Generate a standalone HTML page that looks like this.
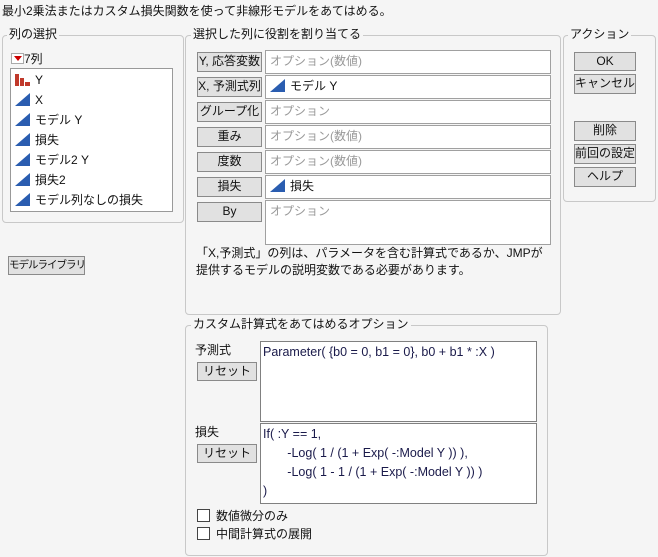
<!DOCTYPE html><html><head><meta charset="utf-8"><style>
body{margin:0;width:658px;height:557px;background:#f5f5f5;font-family:"Liberation Sans","Noto Sans CJK JP",sans-serif;font-size:12px;color:#111;position:relative;overflow:hidden}
.a{position:absolute;white-space:nowrap}
.g{position:absolute;border:1px solid #c8c8c8;border-radius:4px}
.gl{position:absolute;background:#f5f5f5;padding:0 2px;line-height:14px}
.b{position:absolute;background:#e1e1e1;border:1px solid #8a8a8a;box-sizing:border-box;text-align:center;line-height:17px;white-space:nowrap;overflow:hidden}
.f{position:absolute;background:#fff;border:1px solid #a0a0a0;box-sizing:border-box;padding-left:4px;line-height:21px}
.ph{color:#999}
.tri{display:inline-block;width:0;height:0;border-left:15px solid transparent;border-bottom:13px solid #2a5db0;vertical-align:-2px;margin-right:5px}
.ta{position:absolute;background:#fff;border:1px solid #808080;box-sizing:border-box;padding:1px 2px;color:#1a1a4a;font-size:12.5px;line-height:19px;white-space:pre}
.cb{position:absolute;width:13px;height:13px;border:1px solid #444;background:#fff;box-sizing:border-box}
</style></head><body>
<div class="a" style="left:2px;top:2px">最小2乗法またはカスタム損失関数を使って非線形モデルをあてはめる。</div>

<div class="g" style="left:2px;top:35px;width:180px;height:186px"></div>
<div class="gl" style="left:7px;top:27px">列の選択</div>
<div class="a" style="left:11px;top:50px"><span style="display:inline-block;width:11px;height:9px;border:1px solid #aaa;background:#fff;position:relative;vertical-align:-1px"><span style="position:absolute;left:2px;top:2px;border-left:4px solid transparent;border-right:4px solid transparent;border-top:5px solid #c00"></span></span>7列</div>
<div style="position:absolute;left:10px;top:68px;width:163px;height:144px;background:#fff;border:1px solid #999;box-sizing:border-box"></div>
<div class="a" style="left:15px;top:70px;line-height:20px">
<div><span style="display:inline-block;width:15px;height:14px;vertical-align:-2px;margin-right:5px;position:relative"><span style="position:absolute;left:0;bottom:0;width:4px;height:12px;background:#c0392b"></span><span style="position:absolute;left:5px;bottom:0;width:4px;height:8px;background:#c0392b"></span><span style="position:absolute;left:10px;bottom:0;width:5px;height:4px;background:#c0392b"></span></span>Y</div>
<div><span class="tri"></span>X</div>
<div><span class="tri"></span>モデル Y</div>
<div><span class="tri"></span>損失</div>
<div><span class="tri"></span>モデル2 Y</div>
<div><span class="tri"></span>損失2</div>
<div><span class="tri"></span>モデル列なしの損失</div>
</div>
<div class="b" style="left:8px;top:256px;width:77px;height:19px;font-size:10.5px;letter-spacing:-1px;padding:0">モデルライブラリ</div>

<div class="g" style="left:185px;top:35px;width:374px;height:278px"></div>
<div class="gl" style="left:191px;top:27px">選択した列に役割を割り当てる</div>
<div class="b" style="left:197px;top:52px;width:65px;height:20px">Y, 応答変数</div>
<div class="b" style="left:197px;top:77px;width:65px;height:20px">X, 予測式列</div>
<div class="b" style="left:197px;top:102px;width:65px;height:20px">グループ化</div>
<div class="b" style="left:197px;top:127px;width:65px;height:20px">重み</div>
<div class="b" style="left:197px;top:152px;width:65px;height:20px">度数</div>
<div class="b" style="left:197px;top:177px;width:65px;height:20px">損失</div>
<div class="b" style="left:197px;top:202px;width:65px;height:20px">By</div>
<div class="f ph" style="left:265px;top:50px;width:286px;height:24px">オプション(数値)</div>
<div class="f" style="left:265px;top:75px;width:286px;height:24px"><span class="tri"></span>モデル Y</div>
<div class="f ph" style="left:265px;top:100px;width:286px;height:24px">オプション</div>
<div class="f ph" style="left:265px;top:125px;width:286px;height:24px">オプション(数値)</div>
<div class="f ph" style="left:265px;top:150px;width:286px;height:24px">オプション(数値)</div>
<div class="f" style="left:265px;top:175px;width:286px;height:24px"><span class="tri"></span>損失</div>
<div class="f ph" style="left:265px;top:200px;width:286px;height:45px">オプション</div>
<div class="a" style="left:196px;top:245px;line-height:17px">「X,予測式」の列は、パラメータを含む計算式であるか、JMPが<br>提供するモデルの説明変数である必要があります。</div>

<div class="g" style="left:563px;top:35px;width:91px;height:165px"></div>
<div class="gl" style="left:568px;top:27px">アクション</div>
<div class="b" style="left:574px;top:52px;width:62px;height:19px">OK</div>
<div class="b" style="left:574px;top:74px;width:62px;height:20px">キャンセル</div>
<div class="b" style="left:574px;top:121px;width:62px;height:20px">削除</div>
<div class="b" style="left:574px;top:144px;width:62px;height:20px">前回の設定</div>
<div class="b" style="left:574px;top:167px;width:62px;height:20px">ヘルプ</div>

<div class="g" style="left:185px;top:325px;width:361px;height:229px"></div>
<div class="gl" style="left:191px;top:317px">カスタム計算式をあてはめるオプション</div>
<div class="a" style="left:195px;top:341px">予測式</div>
<div class="b" style="left:197px;top:362px;width:60px;height:19px">リセット</div>
<div class="ta" style="left:260px;top:341px;width:277px;height:81px">Parameter( {b0 = 0, b1 = 0}, b0 + b1 * :X )</div>
<div class="a" style="left:195px;top:423px">損失</div>
<div class="b" style="left:197px;top:444px;width:60px;height:19px">リセット</div>
<div class="ta" style="left:260px;top:423px;width:277px;height:81px">If( :Y == 1,
       -Log( 1 / (1 + Exp( -:Model Y )) ),
       -Log( 1 - 1 / (1 + Exp( -:Model Y )) )
)</div>
<div class="cb" style="left:197px;top:509px"></div>
<div class="a" style="left:216px;top:507px">数値微分のみ</div>
<div class="cb" style="left:197px;top:527px"></div>
<div class="a" style="left:216px;top:525px">中間計算式の展開</div>
</body></html>
